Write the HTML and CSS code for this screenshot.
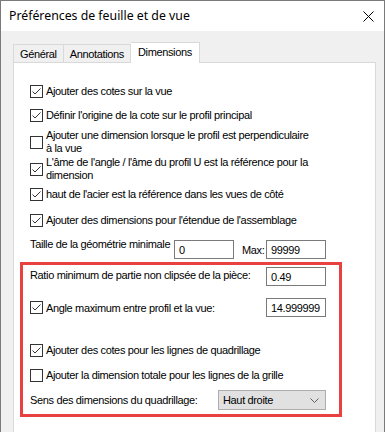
FILE: index.html
```html
<!DOCTYPE html>
<html lang="fr">
<head>
    <meta charset="UTF-8">
    <title>Préférences de feuille et de vue</title>
    <link rel="stylesheet" href="styles.css">
</head>
<body>
    <div class="window">
        <div class="titlebar">
            <span class="title">Préférences de feuille et de vue</span>
            <svg class="close" width="11" height="11" viewBox="0 0 11 11">
                <path d="M0.5 0.5 L10.5 10.5 M10.5 0.5 L0.5 10.5" stroke="#000" stroke-width="1" fill="none"/>
            </svg>
        </div>

        <div class="content">
            <div class="tabs">
                <div class="tab">Général</div>
                <div class="tab">Annotations</div>
                <div class="tab active">Dimensions</div>
            </div>

            <div class="panel">
                <div class="options">
                    <div class="row check mt20">
                        <span class="box on"><svg viewBox="0 0 11 11"><path d="M1.5 5.5 L4 8 L9.5 2.5"/></svg></span>
                        <span>Ajouter des cotes sur la vue</span>
                    </div>
                    <div class="row check mt8">
                        <span class="box on"><svg viewBox="0 0 11 11"><path d="M1.5 5.5 L4 8 L9.5 2.5"/></svg></span>
                        <span>Définir l'origine de la cote sur le profil principal</span>
                    </div>
                    <div class="row check two mt6">
                        <span class="box"></span>
                        <span>Ajouter une dimension lorsque le profil est perpendiculaire<br>à la vue</span>
                    </div>
                    <div class="row check two mt1">
                        <span class="box on"><svg viewBox="0 0 11 11"><path d="M1.5 5.5 L4 8 L9.5 2.5"/></svg></span>
                        <span>L'âme de l'angle / l'âme du profil U est la référence pour la<br>dimension</span>
                    </div>
                    <div class="row check mt4">
                        <span class="box on"><svg viewBox="0 0 11 11"><path d="M1.5 5.5 L4 8 L9.5 2.5"/></svg></span>
                        <span>haut de l'acier est la référence dans les vues de côté</span>
                    </div>
                    <div class="row check mt10">
                        <span class="box on"><svg viewBox="0 0 11 11"><path d="M1.5 5.5 L4 8 L9.5 2.5"/></svg></span>
                        <span>Ajouter des dimensions pour l'étendue de l'assemblage</span>
                    </div>
                    <div class="row size mt12">
                        <span class="size-label">Taille de la géométrie minimale</span>
                        <input class="field" type="text" value="0">
                        <span class="max-label">Max:</span>
                        <input class="field" type="text" value="99999">
                    </div>
                </div>

                <div class="highlight">
                    <div class="row field-row">
                        <span class="ratio-label">Ratio minimum de partie non clipsée de la pièce:</span>
                        <input class="field" type="text" value="0.49">
                    </div>
                    <div class="row field-row mt12">
                        <span class="check">
                            <span class="box on"><svg viewBox="0 0 11 11"><path d="M1.5 5.5 L4 8 L9.5 2.5"/></svg></span>
                            <span>Angle maximum entre profil et la vue:</span>
                        </span>
                        <input class="field tight" type="text" value="14.999999">
                    </div>
                    <div class="row check mt25">
                        <span class="box on"><svg viewBox="0 0 11 11"><path d="M1.5 5.5 L4 8 L9.5 2.5"/></svg></span>
                        <span>Ajouter des cotes pour les lignes de quadrillage</span>
                    </div>
                    <div class="row check mt9">
                        <span class="box"></span>
                        <span>Ajouter la dimension totale pour les lignes de la grille</span>
                    </div>
                    <div class="row field-row mt7">
                        <span>Sens des dimensions du quadrillage:</span>
                        <div class="combo">
                            <span>Haut droite</span>
                            <svg width="9" height="5" viewBox="0 0 9 5"><path d="M0.5 0.5 L4.5 4.5 L8.5 0.5" stroke="#606060" fill="none"/></svg>
                        </div>
                    </div>
                </div>
            </div>
        </div>
    </div>
</body>
</html>
```

FILE: styles.css
```css
* {
    box-sizing: border-box;
}

body {
    margin: 0;
    font-family: "Liberation Sans", Arial, sans-serif;
    font-size: 11px;
    letter-spacing: -0.35px;
    color: #000;
    background: #f0f0f0;
    overflow: hidden;
}

.window {
    width: 385px;
    height: 432px;
    border: 1px solid #7a7a7a;
    border-bottom: none;
    background: #f0f0f0;
    display: flex;
    flex-direction: column;
}

.titlebar {
    flex: none;
    height: 30px;
    background: #fff;
    display: flex;
    align-items: center;
    justify-content: space-between;
    padding: 0 10px 0 8px;
}

.title {
    font-family: "Noto Sans", "Open Sans", sans-serif;
    font-size: 12.3px;
    letter-spacing: 0;
    line-height: 16px;
}

.content {
    flex: 1;
    display: flex;
    flex-direction: column;
    padding: 11px 8px 0 12px;
}

.tabs {
    flex: none;
    display: flex;
    align-items: flex-end;
    height: 20px;
    position: relative;
    z-index: 1;
}

.tab {
    height: 18px;
    line-height: 18px;
    padding: 0 6px;
    border: 1px solid #d9d9d9;
    border-bottom: none;
    background: #f0f0f0;
}

.tab + .tab {
    border-left: none;
}

.tab.active {
    height: 21px;
    margin-bottom: -1px;
    line-height: 18px;
    padding: 0 7px;
    background: #fff;
}

.panel {
    flex: 1;
    background: #fff;
    border: 1px solid #d9d9d9;
    border-bottom: none;
    padding-left: 6px;
}

.options {
    padding-left: 10px;
    display: flex;
    flex-direction: column;
}

.row {
    display: flex;
    align-items: center;
    flex: none;
    min-height: 16px;
    line-height: 16px;
}

.check {
    display: flex;
    align-items: center;
    gap: 3px;
}

.two {
    line-height: 13px;
}

.box {
    width: 13px;
    height: 13px;
    flex: none;
    border: 1px solid #333;
    background: #fff;
    display: flex;
}

.box svg {
    width: 11px;
    height: 11px;
}

.box path {
    stroke: #333;
    stroke-width: 1;
    fill: none;
}

.mt1 { margin-top: 1px; }
.mt4 { margin-top: 4px; }
.mt6 { margin-top: 6px; }
.mt7 { margin-top: 7px; }
.mt8 { margin-top: 8px; }
.mt9 { margin-top: 9px; }
.mt10 { margin-top: 10px; }
.mt12 { margin-top: 12px; }
.mt20 { margin-top: 20px; }
.mt25 { margin-top: 25px; }

.field {
    width: 60px;
    height: 19px;
    margin: 0;
    padding: 1px 4px 0;
    border: 1px solid #7a7a7a;
    background: #fff;
    font: inherit;
    letter-spacing: inherit;
    color: #000;
    outline: none;
}

.field.tight {
    padding-right: 0;
}

.size-label {
    width: 144px;
    white-space: nowrap;
    align-self: flex-start;
    margin-top: -4px;
}

.max-label {
    width: 24px;
    margin-left: 8px;
}

.highlight {
    flex: none;
    width: 322px;
    margin-top: 3px;
    border: 3px solid #e8413f;
    padding: 2px 13px 4px 7px;
    display: flex;
    flex-direction: column;
}

.field-row {
    justify-content: space-between;
}

.ratio-label {
    margin-bottom: 3px;
}

.combo {
    width: 108px;
    height: 20px;
    border: 1px solid #adadad;
    background: #e1e1e1;
    display: flex;
    align-items: center;
    justify-content: space-between;
    padding: 0 6px 0 4px;
}
```
